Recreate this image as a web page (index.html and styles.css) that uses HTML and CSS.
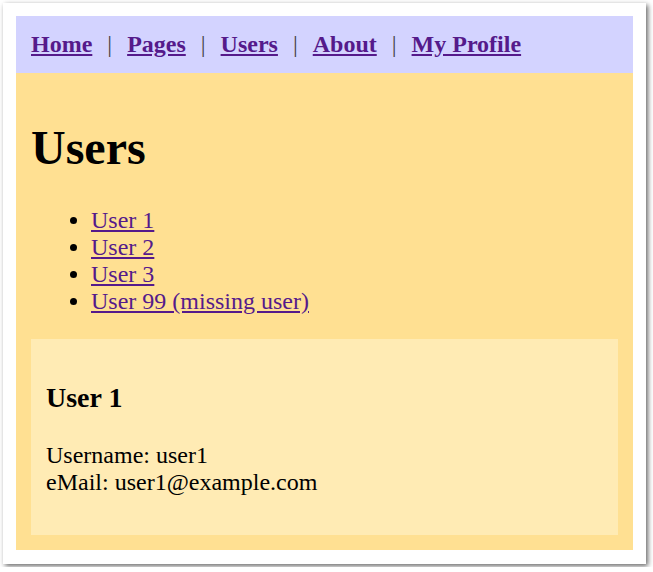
FILE: index.html
```html
<!DOCTYPE html>
<html lang="en">
<head>
<meta charset="utf-8">
<title>Users</title>
<link rel="stylesheet" href="styles.css">
</head>
<body>
<div class="window">
  <nav class="nav">
    <a href="#home">Home</a><span class="sep">|</span><a href="#pages">Pages</a><span class="sep">|</span><a href="#users">Users</a><span class="sep">|</span><a href="#about">About</a><span class="sep">|</span><a href="#profile">My Profile</a>
  </nav>
  <main class="main">
    <h1 class="title">Users</h1>
    <ul class="user-list">
      <li><a href="#u1">User 1</a></li>
      <li><a href="#u2">User 2</a></li>
      <li><a href="#u3">User 3</a></li>
      <li><a href="#u99">User 99 (missing user)</a></li>
    </ul>
    <section class="detail">
      <h3 class="detail-title">User 1</h3>
      <p class="detail-body">Username: user1<br>eMail: user1@example.com</p>
    </section>
  </main>
</div>
</body>
</html>
```
FILE: styles.css
```css
html, body {
  margin: 0;
  padding: 0;
  background: #ffffff;
}

body {
  font-family: "Liberation Serif", "Times New Roman", serif;
  font-size: 24px;
  color: #000;
}

a {
  color: #551a8b;
  text-decoration: underline;
}

.window {
  box-sizing: border-box;
  margin: 3px;
  width: 643px;
  height: 561px;
  padding: 13px;
  background: #ffffff;
  box-shadow: 2px 2px 5px rgba(0, 0, 0, 0.6);
}

.nav {
  display: flex;
  align-items: baseline;
  background: #d3d3ff;
  padding: 15px 15px;
  font-weight: bold;
  line-height: 27px;
}

.sep {
  font-weight: normal;
  color: #444;
  margin: 0 15px;
}

.main {
  background: #ffe092;
  padding: 15px;
}

.title {
  font-size: 48px;
  margin: 32px 0;
  line-height: 55px;
}

.user-list {
  margin: 24px 0;
  padding-left: 60px;
  line-height: 27px;
}

.detail {
  background: #ffebb4;
  padding: 15px;
}

.detail-title {
  font-size: 28px;
  margin: 28px 0;
  line-height: 32px;
}

.detail-body {
  margin: 24px 0;
  line-height: 27px;
}
```
